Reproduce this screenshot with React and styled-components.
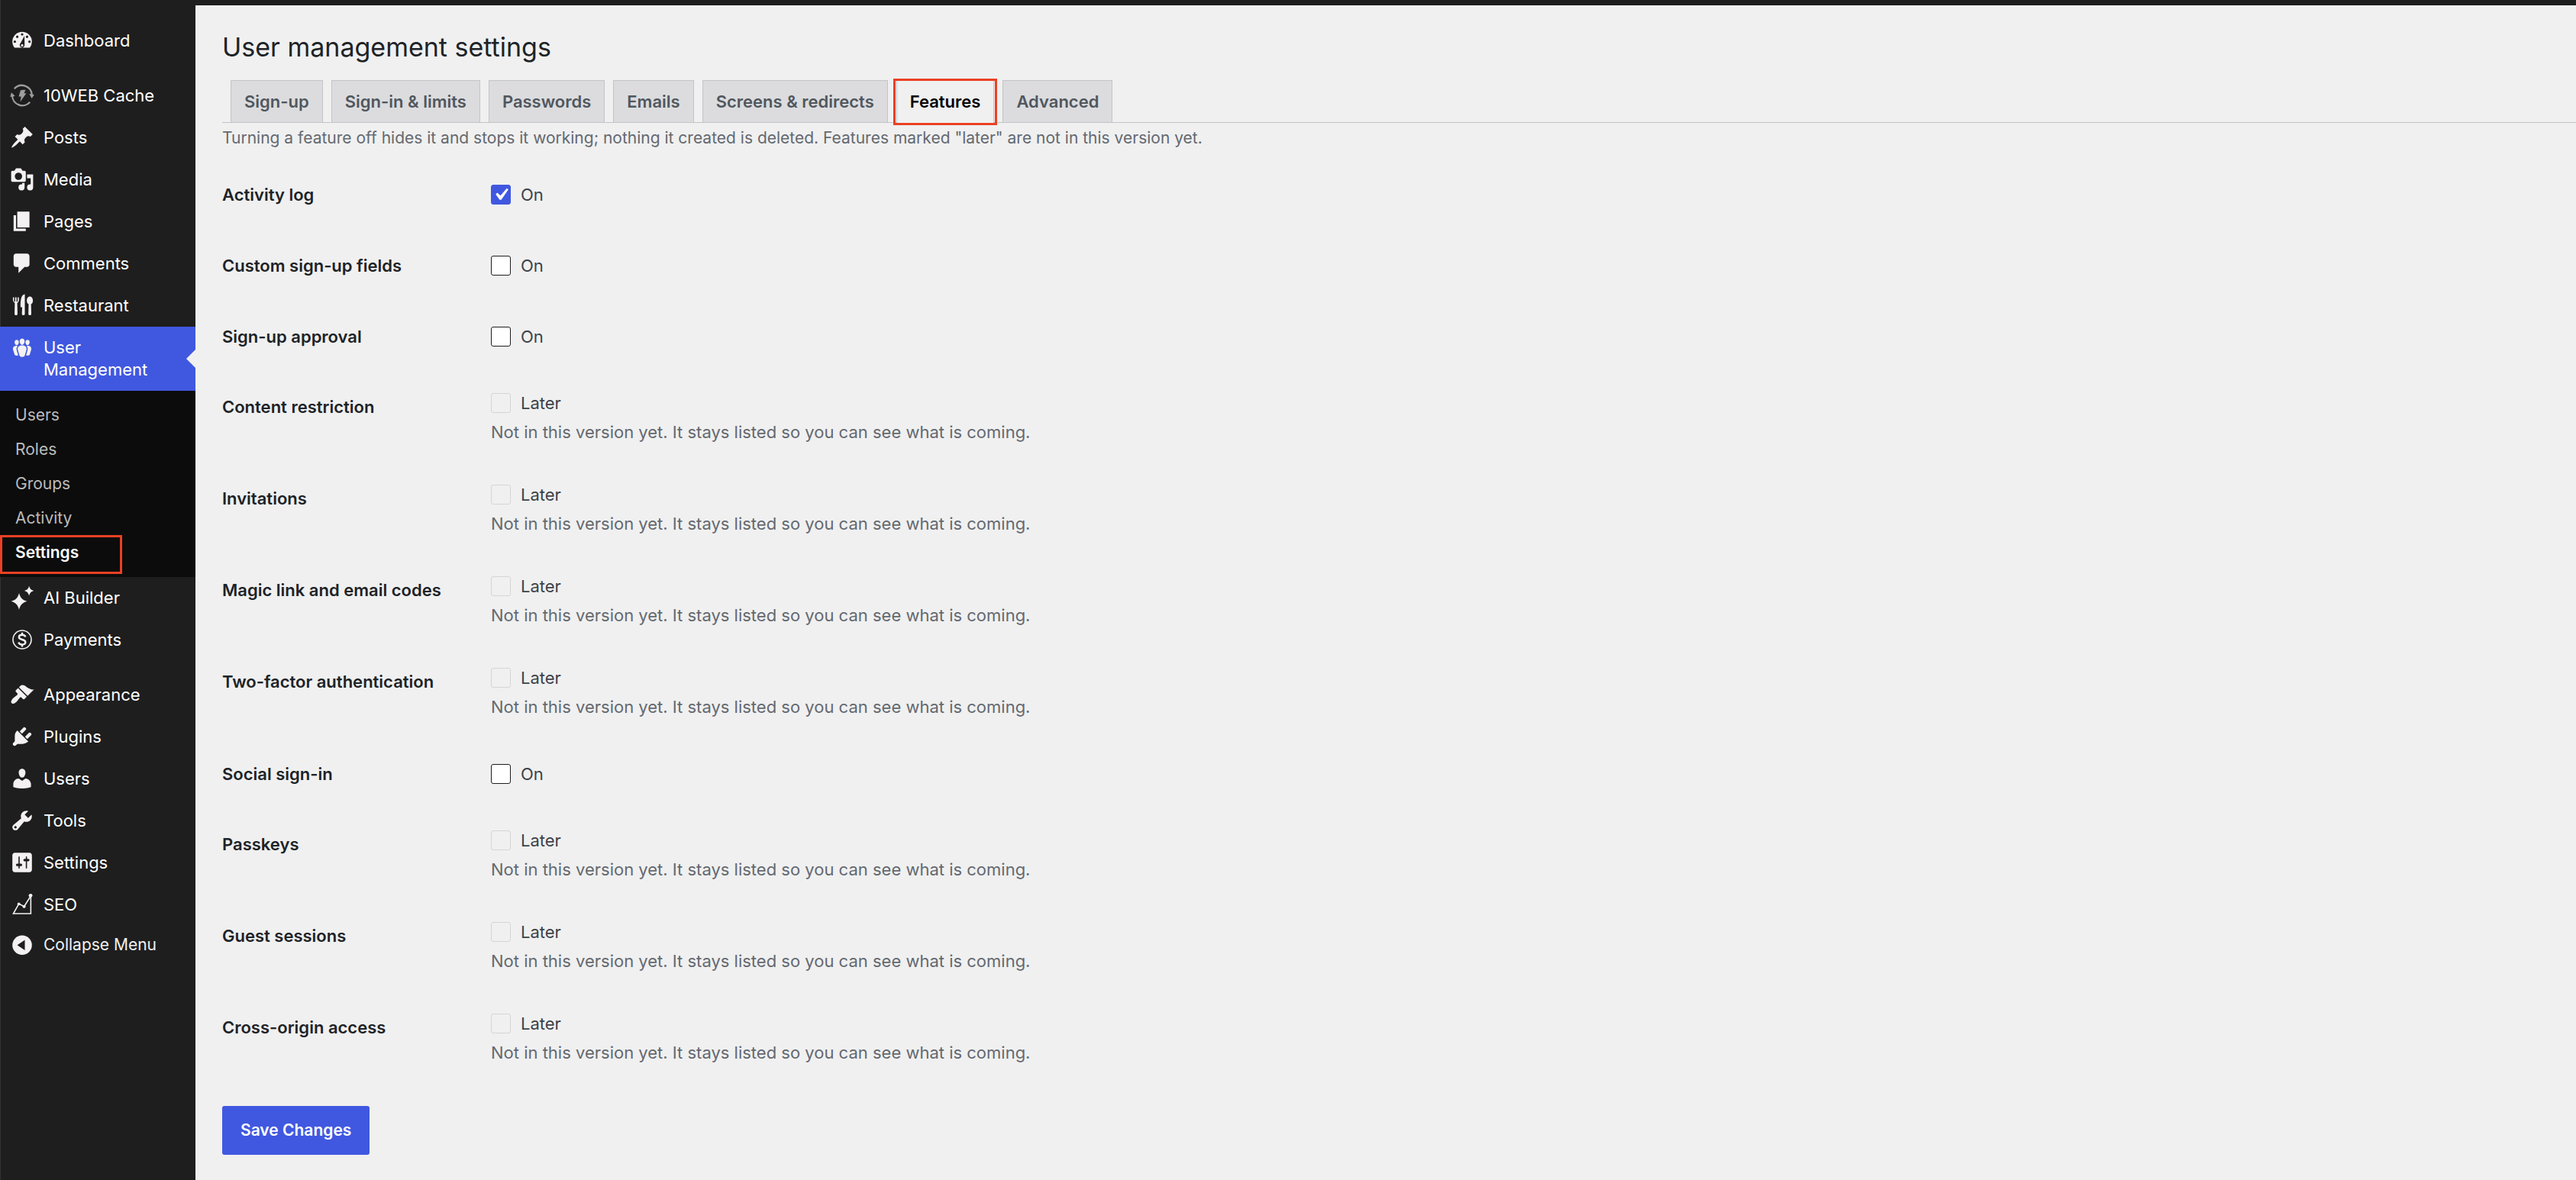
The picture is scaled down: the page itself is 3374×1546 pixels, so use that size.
import React, { useState } from "react";
import styled, { createGlobalStyle } from "styled-components";

const topMenu = [
  { name: "Dashboard", icon: "dashboard" },
  { separator: true },
  { name: "10WEB Cache", icon: "cache" },
  { name: "Posts", icon: "pin" },
  { name: "Media", icon: "media" },
  { name: "Pages", icon: "pages" },
  { name: "Comments", icon: "comment" },
  { name: "Restaurant", icon: "food" },
];

const bottomMenu = [
  { name: "AI Builder", icon: "sparkle" },
  { name: "Payments", icon: "dollar" },
  { separator: true },
  { name: "Appearance", icon: "brush" },
  { name: "Plugins", icon: "plug" },
  { name: "Users", icon: "user" },
  { name: "Tools", icon: "wrench" },
  { name: "Settings", icon: "sliders" },
  { name: "SEO", icon: "chart" },
];

const subMenu = ["Users", "Roles", "Groups", "Activity", "Settings"];

const tabs = [
  "Sign-up",
  "Sign-in & limits",
  "Passwords",
  "Emails",
  "Screens & redirects",
  "Features",
  "Advanced",
];

const features = [
  { id: "activity", label: "Activity log" },
  { id: "fields", label: "Custom sign-up fields" },
  { id: "approval", label: "Sign-up approval" },
  { id: "restriction", label: "Content restriction", later: true },
  { id: "invitations", label: "Invitations", later: true },
  { id: "magic", label: "Magic link and email codes", later: true },
  { id: "twofactor", label: "Two-factor authentication", later: true },
  { id: "social", label: "Social sign-in" },
  { id: "passkeys", label: "Passkeys", later: true },
  { id: "guests", label: "Guest sessions", later: true },
  { id: "cors", label: "Cross-origin access", later: true },
];

// all icons share a 20 unit grid
const icons = {
  dashboard: (
    <path
      fillRule="evenodd"
      d="M3.76 16h12.48A7.98 7.98 0 0 0 18 11a8 8 0 1 0-16 0c0 1.9.66 3.64 1.76 5zM10 4a1 1 0 1 1 0 2 1 1 0 0 1 0-2zM6 6a1 1 0 1 1 0 2 1 1 0 0 1 0-2zm8 0a1 1 0 1 1 0 2 1 1 0 0 1 0-2zm-2.1.2l.1 7.500a2 2 0 1 1-3.300-1.500zM4 10a1 1 0 1 1 0 2 1 1 0 0 1 0-2zm12 0a1 1 0 1 1 0 2 1 1 0 0 1 0-2zm-6 3a1 1 0 1 0 0 2 1 1 0 0 0 0-2z"
    />
  ),
  cache: (
    <g opacity="0.6">
      <path
        fill="none"
        stroke="currentColor"
        strokeWidth="1.4"
        d="M3.6 4.5A8.3 8.3 0 0 1 18 9.600M16.400 15.500A8.300 8.300 0 0 1 1.900 10"
      />
      <path d="M15.800 8.800l2.100 3.700 2-3.200zM.200 11.200l1-3.600 3 2.800zM10.600 5.400h2.200l-1.200 2.900h1.800l-5 7 .8-4.300H7.200l1.500-5.200z" />
    </g>
  ),
  pin: (
    <path d="M10.440 3.020l1.820-1.820 6.360 6.350-1.830 1.820c-1.050-.68-2.480-.57-3.410.36l-.75.750c-.92.930-1.040 2.350-.35 3.410l-1.830 1.820-2.410-2.410-2.800 2.790c-.42.420-3.380 2.710-3.800 2.290s1.860-3.390 2.280-3.810l2.790-2.790L4.100 9.360l1.830-1.820c1.050.69 2.480.57 3.400-.36l.75-.750c.93-.920 1.050-2.350.36-3.410z" />
  ),
  media: (
    <path
      fillRule="evenodd"
      d="M13 11V4c0-.55-.45-1-1-1h-1.670L9 1H5L3.670 3H2c-.55 0-1 .45-1 1v7c0 .550.450 1 1 1h10c.550 0 1-.450 1-1zM7 4.500a3 3 0 1 1 0 6 3 3 0 0 1 0-6zM14 6h5v10.500a2.500 2.500 0 1 1-2.500-2.500c.170 0 .340.020.5.050V9H14V6zM9.500 14c.170 0 .340.020.5.050V13h2v3.500A2.500 2.500 0 1 1 9.500 14z"
    />
  ),
  pages: <path d="M6 15V2h10v13H6zM5 16h8v2H3V5h2v11z" />,
  comment: (
    <path d="M5 2h9c1.100 0 2 .9 2 2v7c0 1.100-.9 2-2 2h-2l-5 5v-5H5c-1.100 0-2-.9-2-2V4c0-1.100.9-2 2-2z" />
  ),
  food: (
    <path d="M2.500 3.500h.900V7h.900V3.500h1.100V7h.900V3.500h.900c.4 2.500.2 3.600-.9 4.400l-.3.300.2 8.800a1.200 1.200 0 0 1-2.400 0l.2-8.800C2.600 7.300 2.200 6 2.500 3.500zM12.200 1v16a1.200 1.200 0 0 1-2.400 0l.2-5.500H8.700C8.500 5.500 9.300 1.300 12.200 1zM16.300 2.800c1.700 0 2.500 1.700 2.500 3.300 0 1.500-.5 2.500-1.500 3l.2 7.900a1.200 1.200 0 0 1-2.400 0l.2-7.900c-1-.5-1.500-1.500-1.500-3 0-1.600.8-3.300 2.500-3.300z" />
  ),
  groups: (
    <path d="M8.030 4.460c-.290 1.280.55 3.460 1.970 3.460 1.410 0 2.250-2.180 1.960-3.460-.220-.980-1.080-1.630-1.960-1.630-.890 0-1.740.65-1.970 1.630zm-4.130.9c-.25 1.080.47 2.930 1.670 2.930s1.920-1.850 1.670-2.930c-.190-.830-.920-1.390-1.670-1.390s-1.480.56-1.670 1.390zm8.860 0c-.25 1.080.47 2.930 1.660 2.930 1.200 0 1.920-1.850 1.670-2.930-.190-.830-.920-1.390-1.670-1.390-.740 0-1.470.56-1.660 1.390zm-.590 11.430l1.250-4.300C14.200 10 12.710 8.470 10 8.470c-2.720 0-4.210 1.530-3.440 4.020l1.260 4.300C8.050 17.510 9 18 10 18c.98 0 1.940-.49 2.170-1.210zm-6.100-7.630c-.490.670-.960 1.830-.420 3.590l1.120 3.790c-.34.2-.77.31-1.200.31-.85 0-1.650-.41-1.850-1.030l-1.070-3.650c-.65-2.110.61-3.400 2.920-3.400.27 0 .54.020.79.060-.1.100-.2.220-.29.330zm8.350-.39c2.310 0 3.580 1.290 2.920 3.400l-1.070 3.650c-.2.620-1 1.030-1.850 1.030-.43 0-.86-.110-1.200-.31l1.110-3.770c.55-1.780.08-2.940-.42-3.610-.08-.11-.18-.23-.28-.33.25-.04.51-.06.79-.06z" />
  ),
  sparkle: (
    <path d="M7.500 6.200c1.100 4 2.500 5.500 6.500 6.700-4 1.300-5.400 2.900-6.500 6.900-1.100-4-2.500-5.600-6.500-6.900 4-1.200 5.400-2.700 6.500-6.700zM15.700.500c.7 2.400 1.500 3.200 3.900 3.900-2.400.8-3.200 1.700-3.900 4.100-.7-2.400-1.500-3.300-3.900-4.100 2.400-.7 3.200-1.500 3.900-3.900z" />
  ),
  dollar: (
    <g fill="none" stroke="currentColor">
      <circle cx="10" cy="10" r="7.500" strokeWidth="1" />
      <path
        strokeWidth="1.500"
        d="M12.700 7.800c-.3-1.200-1.300-1.700-2.700-1.700-1.600 0-2.600.7-2.600 1.900 0 2.700 5.300 1.300 5.300 4.100 0 1.300-1.100 2-2.700 2-1.500 0-2.600-.6-2.900-1.900M10 4.200v2M10 14v2"
      />
    </g>
  ),
  brush: (
    <path d="M14.480 11.060L7.410 3.990l1.500-1.500c.5-.560 2.300-.470 3.510.32 1.210.8 1.430 1.280 2.910 2.100 1.180.640 2.450 1.260 4.450.85zm-.710.710L6.700 4.700 4.930 6.470c-.390.390-.390 1.020 0 1.410l1.060 1.060c.39.390.39 1.030 0 1.420-.6.600-1.430 1.110-2.210 1.690-.350.260-.7.530-1.010.840C1.430 14.230.400 16.080 1.400 17.070c.990 1 2.840-.03 4.180-1.360.310-.310.580-.66.850-1.020.57-.780 1.080-1.610 1.690-2.210.39-.39 1.020-.39 1.410 0l1.060 1.060c.390.390 1.020.390 1.410 0z" />
  ),
  plug: (
    <path d="M13.110 4.360L9.870 7.600 8 5.730l3.240-3.240c.350-.340 1.050-.2 1.560.32.520.51.66 1.210.31 1.550zm-8 1.770l.91-1.120 9.010 9.010-1.190.84c-.71.710-2.630 1.160-3.820 1.160H6.140L4.900 17.260c-.590.590-1.540.590-2.120 0-.590-.580-.590-1.530 0-2.120L4 13.900v-4.100c0-1.260.22-2.780 1.110-3.670zm7.260 3.970l3.240-3.240c.340-.350 1.040-.21 1.550.31.520.510.66 1.210.310 1.550l-3.240 3.250z" />
  ),
  user: (
    <path d="M10 9.250c-2.270 0-2.730-3.440-2.730-3.440C7 4.020 7.820 2 9.970 2c2.160 0 2.980 2.020 2.710 3.810 0 0-.410 3.440-2.680 3.440zm0 2.570L12.720 10c2.390 0 4.520 2.330 4.520 4.530v2.490s-3.650 1.130-7.240 1.130c-3.650 0-7.240-1.130-7.240-1.130v-2.490c0-2.250 1.940-4.480 4.470-4.480z" />
  ),
  wrench: (
    <path
      fillRule="evenodd"
      d="M16.680 9.770c-1.340 1.340-3.300 1.670-4.950.99l-5.410 6.520c-.99.990-2.590.99-3.580 0s-.99-2.590 0-3.570l6.520-5.420c-.680-1.650-.35-3.610.99-4.950 1.280-1.280 3.120-1.620 4.720-1.060l-2.890 2.890 2.820 2.820 2.860-2.870c.530 1.580.180 3.390-1.080 4.650zM3.810 16.210c.4.390 1.040.390 1.430 0 .4-.4.4-1.040 0-1.430-.39-.4-1.030-.4-1.430 0-.39.390-.39 1.030 0 1.430z"
    />
  ),
  sliders: (
    <path
      fillRule="evenodd"
      d="M18 16V4c0-1.100-.9-2-2-2H4c-1.100 0-2 .9-2 2v12c0 1.100.9 2 2 2h12c1.100 0 2-.9 2-2zM8 11h1c.550 0 1 .450 1 1s-.450 1-1 1H8v1.500c0 .280-.220.500-.5.500s-.5-.220-.5-.500V13H6c-.550 0-1-.450-1-1s.450-1 1-1h1V5.500c0-.280.220-.5.500-.5s.500.220.5.500V11zm5-2h-1c-.550 0-1-.450-1-1s.450-1 1-1h1V5.500c0-.280.220-.5.500-.5s.500.220.5.500V7h1c.550 0 1 .450 1 1s-.450 1-1 1h-1v5.500c0 .280-.220.500-.5.500s-.5-.220-.5-.500V9z"
    />
  ),
  chart: (
    <g>
      <path
        fill="none"
        stroke="currentColor"
        strokeWidth="1"
        d="M2.800 17.500h14.300V3L11.700 11.500 7.300 9.500z"
      />
      <circle cx="16.900" cy="2.700" r="1.500" />
      <circle cx="7.300" cy="9.600" r="1.200" />
      <circle cx="11.600" cy="11.700" r="1.300" />
    </g>
  ),
  collapse: (
    <path
      fillRule="evenodd"
      d="M10 2.200a8 8 0 1 1 0 16 8 8 0 0 1 0-16zM12.200 6v8.300L6 10.200z"
    />
  ),
};

const Icon = ({ name }) => (
  <IconBox viewBox="0 0 20 20" aria-hidden="true">
    {icons[name]}
  </IconBox>
);

const MenuList = ({ items }) =>
  items.map((item, index) =>
    item.separator ? (
      <Separator key={index} />
    ) : (
      <MenuLink href="#" key={item.name}>
        <Icon name={item.icon} />
        <span>{item.name}</span>
      </MenuLink>
    )
  );

const App = () => {
  const [activeTab, setActiveTab] = useState("Features");
  const [enabled, setEnabled] = useState({ activity: true });

  const toggle = (id) => {
    setEnabled({ ...enabled, [id]: !enabled[id] });
  };

  return (
    <Page>
      <GlobalStyle />
      <Sidebar>
        <MenuList items={topMenu} />
        <MenuLink href="#" $current>
          <Icon name="groups" />
          <span>User Management</span>
        </MenuLink>
        <SubMenu>
          {subMenu.map((name) => (
            <SubLink href="#" key={name} $current={name === "Settings"}>
              {name}
            </SubLink>
          ))}
        </SubMenu>
        <MenuList items={bottomMenu} />
        <Collapse type="button">
          <Icon name="collapse" />
          <span>Collapse Menu</span>
        </Collapse>
      </Sidebar>
      <Main>
        <Title>User management settings</Title>
        <Tabs>
          {tabs.map((tab) => (
            <Tab
              href="#"
              key={tab}
              $active={tab === activeTab}
              onClick={() => setActiveTab(tab)}
            >
              {tab}
            </Tab>
          ))}
        </Tabs>
        <Intro>
          Turning a feature off hides it and stops it working; nothing it
          created is deleted. Features marked "later" are not in this version
          yet.
        </Intro>
        <form onSubmit={(e) => e.preventDefault()}>
          {features.map((feature) => (
            <Row key={feature.id} $later={feature.later}>
              <RowLabel id={`${feature.id}-label`} $later={feature.later}>
                {feature.label}
              </RowLabel>
              <div>
                <Choice>
                  <Checkbox
                    type="checkbox"
                    aria-describedby={`${feature.id}-label`}
                    checked={!!enabled[feature.id]}
                    disabled={feature.later}
                    onChange={() => toggle(feature.id)}
                  />
                  {feature.later ? "Later" : "On"}
                </Choice>
                {feature.later && (
                  <Note>
                    Not in this version yet. It stays listed so you can see
                    what is coming.
                  </Note>
                )}
              </div>
            </Row>
          ))}
          <Save type="submit">Save Changes</Save>
        </form>
      </Main>
    </Page>
  );
};

const GlobalStyle = createGlobalStyle`
  *, *::after {
    box-sizing: border-box;
  }
  body {
    margin: 0;
    background: #f0f0f0;
    color: #3c434a;
    font-family: Inter, "Liberation Sans", sans-serif;
    font-size: 22px;
    line-height: 30px;
  }
  a {
    text-decoration: none;
  }
`;

const Page = styled.div`
  display: flex;
  min-height: 100vh;
`;

const Sidebar = styled.nav`
  flex: none;
  width: 256px;
  padding-top: 26px;
  background: #1e1e1e;
  box-shadow: inset 1px 0 #333;
`;

const MenuLink = styled.a`
  position: relative;
  display: flex;
  gap: 12px;
  padding: 13px 48px 13px 13px;
  color: #fff;
  background: ${(props) => (props.$current ? "#4058e0" : "transparent")};
  line-height: 29px;
  span {
    flex: 1;
    white-space: ${(props) => (props.$current ? "normal" : "nowrap")};
  }
  &::after {
    content: ${(props) => (props.$current ? '""' : "none")};
    position: absolute;
    right: 0;
    top: 50%;
    margin-top: -12px;
    border: 12px solid transparent;
    border-left: 0;
    border-right-color: #f0f0f0;
  }
`;

const IconBox = styled.svg`
  flex: none;
  width: 32px;
  height: 32px;
  fill: currentColor;
  color: #f3f1f1;
  margin: -2px 0;
`;

const Separator = styled.div`
  height: 17px;
`;

const SubMenu = styled.div`
  padding: 9px 0 10px;
  background: #0c0c0c;
`;

const SubLink = styled.a`
  position: relative;
  display: block;
  padding: 8px 20px 7px;
  color: ${(props) => (props.$current ? "#fff" : "#bbb")};
  font-size: 21px;
  font-weight: ${(props) => (props.$current ? 600 : 400)};
  &::after {
    content: ${(props) => (props.$current ? '""' : "none")};
    position: absolute;
    left: 0;
    top: 0;
    width: 160px;
    height: 51px;
    border: 3px solid #eb4024;
  }
`;

const Collapse = styled.button`
  display: flex;
  align-items: center;
  gap: 12px;
  padding: 10px 13px;
  border: 0;
  background: none;
  color: #f0f0f1;
  font: inherit;
  font-size: 21px;
  white-space: nowrap;
`;

const Main = styled.main`
  flex: 1;
  min-width: 0;
  padding: 34px 0 32px 35px;
  border-top: 7px solid #1e1e1e;
`;

const Title = styled.h1`
  margin: 0;
  color: #1d2327;
  font-size: 34px;
  font-weight: 400;
  line-height: 42px;
`;

const Tabs = styled.nav`
  display: flex;
  gap: 11px;
  margin-top: 22px;
  padding-left: 11px;
  border-bottom: 1px solid #c3c4c7;
`;

const Tab = styled.a`
  position: relative;
  padding: 8px 17px;
  margin-bottom: ${(props) => (props.$active ? "-1px" : 0)};
  border: 1px solid #c3c4c7;
  border-bottom: 0;
  color: ${(props) => (props.$active ? "#000" : "#50575e")};
  background: ${(props) => (props.$active ? "#f0f0f0" : "#dcdcde")};
  font-weight: 600;
  line-height: 38px;
  white-space: nowrap;
  &::after {
    content: ${(props) => (props.$active ? '""' : "none")};
    position: absolute;
    inset: -3px -5px;
    border: 3px solid #eb4024;
  }
`;

const Intro = styled.p`
  margin: 5px 0 12px;
  color: #646970;
  font-size: 21px;
`;

const Row = styled.div`
  display: grid;
  grid-template-columns: 352px 1fr;
  height: ${(props) => (props.$later ? "120px" : "93px")};
  padding-top: ${(props) => (props.$later ? "26px" : "32px")};
`;

const RowLabel = styled.div`
  padding-top: ${(props) => (props.$later ? "5px" : 0)};
  color: #1d2327;
  font-weight: 600;
`;

const Choice = styled.label`
  display: inline-flex;
  align-items: center;
  gap: 13px;
  vertical-align: top;
`;

const Checkbox = styled.input`
  appearance: none;
  width: 26px;
  height: 26px;
  margin: 0;
  border: 1px solid #1e1e1e;
  border-radius: 3px;
  background: #fff;
  &:checked {
    border-color: #4058e0;
    background: #4058e0
      url("data:image/svg+xml,%3Csvg xmlns='http://www.w3.org/2000/svg' viewBox='0 0 20 20'%3E%3Cpath d='M14.83 4.890l1.340.940-5.810 8.380H9.020L5.780 9.670l1.340-1.250 2.570 2.400z' fill='%23fff'/%3E%3C/svg%3E")
      center / 32px no-repeat;
  }
  &:disabled {
    border-color: #d5d5d7;
    background: transparent;
  }
`;

const Note = styled.p`
  margin: 8px 0 0;
  color: #646970;
`;

const Save = styled.button`
  height: 64px;
  margin-top: 29px;
  padding: 0 24px;
  border: 0;
  border-radius: 3px;
  color: #fff;
  background: #4058e0;
  font: inherit;
  font-size: 21px;
  font-weight: 600;
`;

export default App;
